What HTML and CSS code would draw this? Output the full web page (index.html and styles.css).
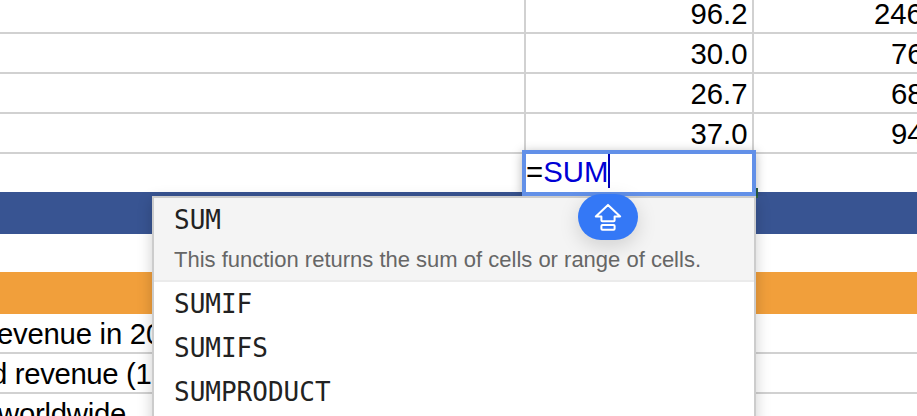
FILE: index.html
```html
<!DOCTYPE html>
<html lang="en">
<head>
<meta charset="utf-8">
<title>Spreadsheet</title>
<link rel="stylesheet" href="styles.css">
</head>
<body>
<main class="sheet">
  <div class="row first"><div class="cell"></div><div class="cell num">96.2</div><div class="cell next">246</div></div>
  <div class="row"><div class="cell"></div><div class="cell num">30.0</div><div class="cell next two">76</div></div>
  <div class="row"><div class="cell"></div><div class="cell num">26.7</div><div class="cell next two">68</div></div>
  <div class="row"><div class="cell"></div><div class="cell num">37.0</div><div class="cell next two">94</div></div>
  <div class="gap"></div>
  <div class="band blue"></div>
  <div class="gap"></div>
  <div class="band orange"></div>
  <div class="label one">evenue in 20</div>
  <div class="label second">d revenue (1</div>
  <div class="label third">worldwide</div>

  <div class="handle"></div>
  <section class="popup">
    <div class="active">
      <div class="name">SUM</div>
      <div class="desc">This function returns the sum of cells or range of cells.</div>
    </div>
    <div class="name">SUMIF</div>
    <div class="name">SUMIFS</div>
    <div class="name">SUMPRODUCT</div>
  </section>
  <div class="editor"><span>=</span><span class="fn">SUM</span><i class="caret"></i></div>
  <div class="caps">
    <svg width="28" height="28" viewBox="0 0 28 28" fill="none" stroke="#fff" stroke-width="2" stroke-linejoin="round">
      <path d="M14 1.9 26.2 13.4H20.6V17.2Q20.6 18.2 19.6 18.2H8.4Q7.4 18.2 7.4 17.2V13.4H1.8Z"/>
      <rect x="7.4" y="21.9" width="13.2" height="4.9" rx="1"/>
    </svg>
  </div>
</main>
</body>
</html>
```
FILE: styles.css
```css
* { box-sizing: border-box; }
body { margin: 0; background: #fff; }
.sheet {
  position: relative;
  width: 917px;
  height: 416px;
  overflow: hidden;
  font: 29.33px/38px "Liberation Sans", Arial, sans-serif;
  color: #000;
}
.row { display: grid; grid-template-columns: 526px 228px 163px; grid-template-rows: 100%; height: 40px; }
.row.first { height: 34px; }
.row.first .cell { line-height: 26px; }
.cell {
  border-right: 2px solid #d1d1d1;
  border-bottom: 2px solid #d1d1d1;
  padding-top: 1px;
  white-space: nowrap;
}
.cell.num { text-align: right; padding-right: 4.5px; }
.cell.next { border-right: 0; padding-left: 120px; }
.cell.two { padding-left: 137px; }
.gap { height: 38px; }
.band { height: 42px; }
.blue { background: #385492; }
.orange { background: #f19f3b; }
.label {
  height: 40px;
  padding-top: 1px;
  border-bottom: 2px solid #d1d1d1;
  white-space: nowrap;
  letter-spacing: -.25px;
}
.label.one { text-indent: -3px; }
.label.second { text-indent: -9px; letter-spacing: -.35px; }
.label.third { text-indent: -2px; }
.handle { position: absolute; left: 754px; top: 188px; width: 4px; height: 10px; background: #2c6143; }
.popup {
  position: absolute;
  left: 152px;
  top: 196px;
  width: 604px;
  height: 240px;
  background: #fff;
  border: 2px solid #ccc;
  box-shadow: 0 4px 14px rgba(0, 0, 0, .2);
}
.active { height: 84px; background: #f4f4f4; border-bottom: 2px solid #ebebeb; }
.name {
  height: 44px;
  padding-left: 20px;
  font: 26px/45px "DejaVu Sans Mono", monospace;
  color: #222;
}
.desc {
  padding-left: 20px;
  font-size: 22px;
  line-height: 36px;
  color: #666;
  white-space: nowrap;
}
.editor {
  position: absolute;
  left: 522px;
  top: 150px;
  width: 234px;
  height: 46px;
  display: flex;
  border: 4px solid #6290e8;
  background: #fff;
  box-shadow: 0 2px 10px rgba(0, 0, 0, .28);
  clip-path: inset(-12px -14px 0 -12px);
  line-height: 36px;
}
.fn { color: #0000d5; }
.caret { width: 2px; height: 34px; background: #0000b8; }
.caps {
  position: absolute;
  left: 578px;
  top: 194px;
  width: 60px;
  height: 46px;
  display: flex;
  justify-content: center;
  padding-top: 9px;
  border-radius: 23px;
  background: #3478f6;
  box-shadow: 0 6px 20px rgba(0, 0, 0, .15);
}
```
